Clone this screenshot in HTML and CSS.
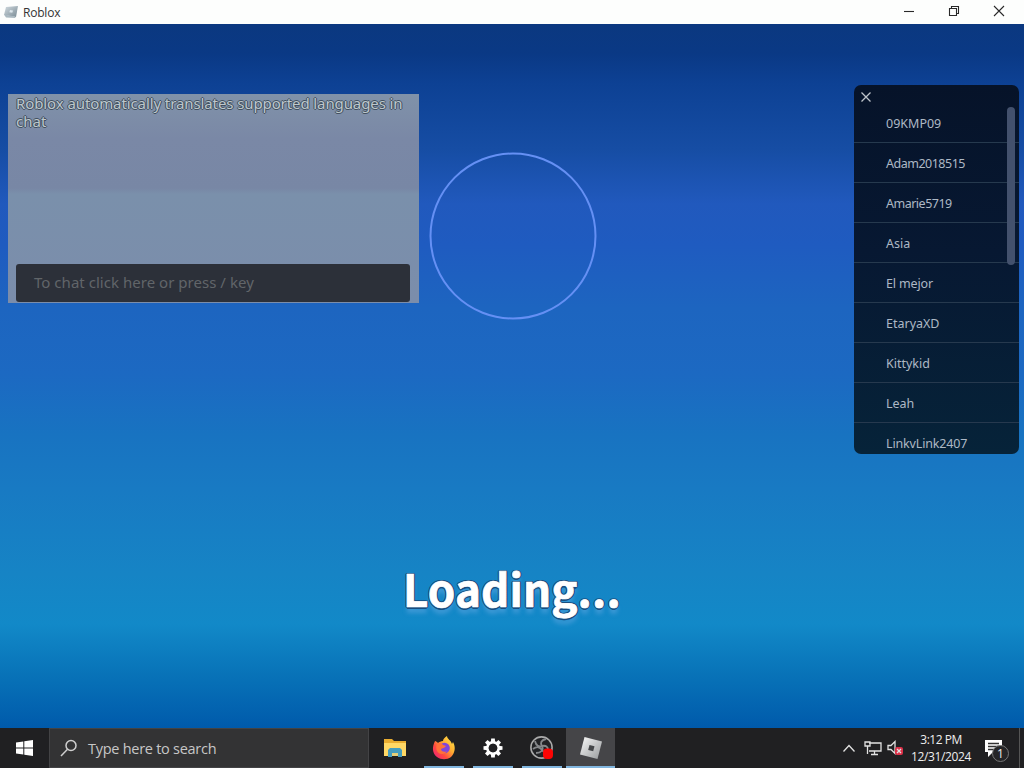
FILE: index.html
```html
<!DOCTYPE html>
<html lang="en">
<head>
<meta charset="utf-8">
<title>Roblox</title>
<link rel="stylesheet" href="styles.css">
</head>
<body>
<header class="titlebar">
  <svg class="app-icon" width="16" height="14" viewBox="0 0 16 14"><defs><linearGradient id="appg" x2="1" y2="1"><stop stop-color="#d3dce1"/><stop offset="1" stop-color="#788a94"/></linearGradient></defs><path d="M3 2 15 1 13 12 1 10Z" fill="url(#appg)"/><path d="M1 9.500 12 11.500 12.500 13 3 12.500Z" fill="#a9b8c0"/><path d="m7 5 3 .5-.7 2.3-3-.5Z" fill="#dce6ec"/></svg>
  <span class="app-name">Roblox</span>
  <div class="window-buttons">
    <svg width="12" height="12" viewBox="0 0 12 12"><path d="M1 6.500h10"/></svg>
    <svg width="12" height="12" viewBox="0 0 12 12"><path d="M1.500 3.500h7v7h-7zM3.500 3.500v-2h7v7h-2"/></svg>
    <svg width="12" height="12" viewBox="0 0 12 12"><path d="m1 1 10 10M11 1 1 11"/></svg>
  </div>
</header>
<main class="stage">
  <div class="hud">
    <section class="chat">
      <p class="message"><span class="first">Roblox automatically translates supported languages in</span><br><span>chat</span></p>
      <div class="chat-input"><span>To chat click here or press / key</span></div>
    </section>
    <svg class="ring" width="168" height="168" viewBox="0 0 168 168"><circle cx="84" cy="84" r="82.500"/></svg>
    <aside class="players">
      <svg class="close" width="12" height="12" viewBox="0 0 12 12"><path d="m1.500 1.500 9 9M10.500 1.500l-9 9"/></svg>
      <ul>
        <li><span>09KMP09</span></li>
        <li><span class="tight">Adam2018515</span></li>
        <li><span class="tight">Amarie5719</span></li>
        <li><span>Asia</span></li>
        <li><span class="snug">El mejor</span></li>
        <li><span>EtaryaXD</span></li>
        <li><span>Kittykid</span></li>
        <li><span>Leah</span></li>
        <li><span class="snug">LinkvLink2407</span></li>
      </ul>
      <div class="scrollbar"></div>
    </aside>
  </div>
  <div class="loading">Loading...</div>
</main>
<footer class="taskbar">
  <div class="start"><svg width="17" height="16" viewBox="0 0 17 16"><path fill="#fff" d="M0 2.500 7.300 1.400v6.100H0zM8.300 1.200 17 0v7.500H8.300zM0 8.500h7.300v6.100L0 13.500zM8.300 8.500H17V16l-8.700-1.200z"/></svg></div>
  <div class="search">
    <svg width="18" height="18" viewBox="0 0 18 18"><circle cx="11" cy="6.500" r="5" /><path d="M7.500 10.300 1 17"/></svg>
    <span>Type here to search</span>
  </div>
  <nav class="apps">
    <div class="app"><svg width="24" height="22" viewBox="0 0 24 22"><path d="M1 2h8l2 2h12v15H1z" fill="#e9ad31"/><path d="M1 6h22v13H1z" fill="#ffd866"/><path d="M5 20v-7l2-2h10l2 2v7h-4v-4H9v4z" fill="#459dbf"/><path d="M9 16h6v3H9z" fill="#e6cf78"/></svg></div>
    <div class="app open"><svg width="24" height="24" viewBox="0 0 24 24"><defs><linearGradient id="fox" x1="1" y1="0" x2="0" y2="1"><stop stop-color="#fff04c"/><stop offset=".4" stop-color="#ffac31"/><stop offset=".67" stop-color="#ff493f"/><stop offset="1" stop-color="#e61984"/></linearGradient></defs><path d="M3 5c1 0 2 1 3 2 1-1 3-2 5-2 0-2 2-4 4-5 0 3 4 4 5 8l1-2c3 5 2 11-2 15-4 3-10 3-14 0-5-4-5-10-2-16Z" fill="url(#fox)"/><circle cx="12.500" cy="12" r="5.300" fill="#8145db"/><path d="M5 8c2-2 5-1 6 1l3 1c-1 2-4 2-5 3 0 2 3 4 6 2-2 4-8 4-10 0-1-2-1-5 0-7Z" fill="#ff7139"/></svg></div>
    <div class="app open"><svg width="22" height="22" viewBox="-11 -11 22 22"><g fill="#fff"><path id="tooth" d="M-1.800-9.500h3.600L2.200-5h-4.400z"/><use href="#tooth" transform="rotate(45)"/><use href="#tooth" transform="rotate(90)"/><use href="#tooth" transform="rotate(135)"/><use href="#tooth" transform="rotate(180)"/><use href="#tooth" transform="rotate(225)"/><use href="#tooth" transform="rotate(270)"/><use href="#tooth" transform="rotate(315)"/></g><circle r="5.600" fill="none" stroke="#fff" stroke-width="2.600"/><circle r="4.300" fill="#202022"/></svg></div>
    <div class="app open"><svg width="26" height="26" viewBox="0 0 26 26"><circle cx="12.500" cy="12.500" r="10.600" fill="#222326" stroke="#aaa" stroke-width="1.600"/><g fill="none" stroke="#85878a" stroke-width="1.800"><path d="M6 6c1 5 4 6 7 5 4-1 6 1 6 4M17 4c-5 1-6 4-4 7 2 4-1 7-6 7M4 14c4-3 7-2 9 1 2 3 5 3 8 0"/></g><rect x="14" y="13.500" width="10" height="10.500" rx="4" fill="#fd0504"/></svg></div>
    <div class="app open active"><svg width="24" height="24" viewBox="0 0 24 24"><defs><linearGradient id="tile" x2="1" y2="1"><stop stop-color="#fafafa"/><stop offset="1" stop-color="#96999b"/></linearGradient></defs><path d="M5.500 1 23 5.500 18.500 23 1 18.500Z" fill="url(#tile)"/><path d="m10.500 9 5 1.300-1.300 5-5-1.300Z" fill="#444649"/></svg></div>
  </nav>
  <div class="tray">
    <svg class="chevron" width="14" height="9" viewBox="0 0 14 9"><path d="m1.500 7.500 5.500-6 5.500 6"/></svg>
    <svg class="network" width="18" height="16" viewBox="0 0 18 16"><path d="M5 3h12v8H5M7 14.500h7M10.500 11v3M1 2h5v4H1zM3.500 6v8"/></svg>
    <svg class="sound" width="18" height="18" viewBox="0 0 18 18"><path d="M1 6.500h3l4-4v12l-4-4H1z"/><rect x="8" y="8" width="8" height="8" rx="2" fill="#dc3048" stroke="none"/><path d="m10 10 4 4M14 10l-4 4"/></svg>
    <div class="clock"><span class="time">3:12 PM</span><span class="date">12/31/2024</span></div>
    <div class="notice"><svg width="20" height="19" viewBox="0 0 20 19"><path fill="#fff" d="M1 1h17v12H9l-5 5v-5H1z"/><path d="M4 4.500h11M4 7.500h11M4 10.500h7" stroke="#333" stroke-width="1.300"/></svg><span class="badge">1</span></div>
    <div class="desktop-edge"></div>
  </div>
</footer>
</body>
</html>
```

FILE: styles.css
```css
* { box-sizing: border-box; }
body { margin: 0; width: 1024px; height: 768px; overflow: hidden; display: flex; flex-direction: column; font-family: "Noto Sans", sans-serif; }
svg { display: block; flex: none; }
.titlebar { height: 24px; flex: none; background: #fdfefd; display: flex; align-items: center; padding-left: 3px; }
.app-name { margin: 1px 0 0 4px; font: 12px/18px "Open Sans", sans-serif; color: #333; letter-spacing: -.2px; }
.window-buttons { margin-left: auto; display: flex; gap: 33px; padding: 0 19px 3px 0; }
.window-buttons svg { fill: none; stroke: #292929; stroke-width: 1.1; }
.stage { height: 704px; flex: none; background: linear-gradient(#0b3880 0, #0a3985 30px, #0d4194 60px, #164da4 125px, #2159bd 180px, #1f5bc0 220px, #1d65c0 285px, #1c69c2 350px, #1873c1 410px, #187ac3 465px, #1684c5 550px, #1289c8 600px, #0873b8 650px, #005aab 704px); }
.hud { display: flex; align-items: flex-start; height: 536px; padding: 61px 5px 0 8px; }
.chat { width: 411px; height: 209px; margin-top: 9px; padding: 0 9px 1px 8px; background: linear-gradient(#8092a9 0, #7a88a6 45px, #7887a5 94px, #7a90ab 100px, #7b8dab 209px); display: flex; flex-direction: column; justify-content: space-between; }
.message { margin: 0; font-size: 15px; line-height: 18px; color: #bdc7cc; text-shadow: -1px 0 #42505f, 1px 0 #42505f, 0 -1px #42505f, 0 1px #42505f; white-space: nowrap; }
.first { letter-spacing: -.1px; }
.chat-input { height: 38px; border-radius: 3px; background: #2c3039; padding-left: 18px; font-size: 15px; line-height: 36px; letter-spacing: .03px; color: #616569; white-space: nowrap; }
.ring { margin: 67px 0 0 10px; fill: none; stroke: #6590f4; stroke-width: 2; }
.players { width: 165px; height: 369px; margin-left: auto; border-radius: 7px; background: linear-gradient(#061329, #071832 45%, #062339); overflow: hidden; position: relative; padding-top: 18px; }
.players ul { list-style: none; margin: 0; padding: 0; }
.players li { height: 40px; border-bottom: 1px solid #26394e; padding-left: 32px; font-size: 12.500px; line-height: 41px; color: #adb8c5; }
.tight { letter-spacing: -.5px; }
.snug { letter-spacing: -.15px; }
.close { position: absolute; left: 6px; top: 6px; fill: none; stroke: #bec4ca; stroke-width: 1.300; }
.scrollbar { position: absolute; right: 4px; top: 22px; width: 8px; height: 158px; border-radius: 4px; background: #43516d; }
.loading { width: 220px; margin: -2px 0 0 403px; font: 700 44px/60px "Noto Sans CJK SC", "Noto Sans", sans-serif; color: #fff; -webkit-text-stroke: .7px #fff; letter-spacing: .1px; white-space: nowrap; text-shadow: -1px -1px #174d80, 1px -1px #174d80, -1px 1px #174d80, 1px 1px #174d80, 0 2px #174d80, 1.500px 0 #174d80, -1.500px 0 #174d80, 0 6px 4px #3d99d6; }
.taskbar { height: 40px; flex: none; display: flex; background: #202022; color: #eee; }
.start { width: 49px; display: flex; align-items: center; justify-content: center; }
.search { width: 320px; background: #333334; border: 1px solid #434345; display: flex; align-items: center; gap: 10px; padding-left: 10px; font: 14.500px/20px "Open Sans", sans-serif; letter-spacing: -.27px; color: #c7c7c7; }
.search span { margin-top: 2px; }
.search svg { fill: none; stroke: #cfcfcf; stroke-width: 1.500; }
.apps { display: flex; padding-left: 1px; }
.app { width: 49px; display: flex; align-items: center; justify-content: center; position: relative; }
.open::after { content: ""; position: absolute; bottom: 0; left: 5px; right: 4px; height: 2px; background: #81b6df; }
.active { background: #454548; }
.active::after { left: 0; right: 0; }
.tray { margin-left: auto; display: flex; align-items: center; }
.tray > svg { fill: none; stroke: #e2e2e2; stroke-width: 1.300; }
.network { margin-left: 8px; }
.sound { margin-left: 5px; }
.clock { width: 70px; margin-left: 1px; display: flex; flex-direction: column; align-items: center; font: 12px/17px "Open Sans", sans-serif; letter-spacing: -.5px; white-space: nowrap; }
.date { letter-spacing: -.35px; }
.notice { width: 32px; margin: 1px 0 0 8px; position: relative; }
.notice + .desktop-edge { margin-left: 3px; }
.badge { position: absolute; left: 8px; top: 6px; width: 17px; height: 17px; border: 1px solid #777; border-radius: 50%; background: #252527; text-align: center; font: 12px/15px "Open Sans", sans-serif; }
.desktop-edge { width: 5px; height: 40px; border-left: 1px solid #555; }
```
